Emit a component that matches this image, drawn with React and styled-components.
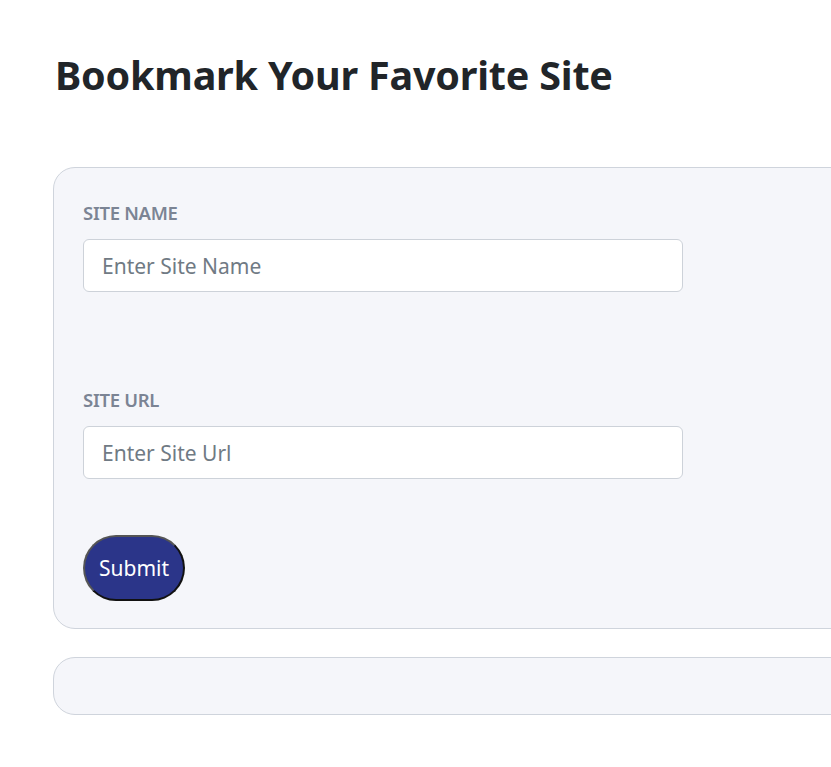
import React from 'react'
import styled, { createGlobalStyle } from 'styled-components'

const GlobalStyle = createGlobalStyle`
  body {
    margin: 0;
    background: #ffffff;
    font-family: "Noto Sans", "Open Sans", sans-serif;
    color: #212529;
    overflow: hidden;
  }
`

export default function App() {
  return (
    <Page>
      <GlobalStyle />
      <Title>Bookmark Your Favorite Site</Title>
      <Card>
        <Field>
          <Label htmlFor="siteName">SITE NAME</Label>
          <Input id="siteName" type="text" placeholder="Enter Site Name" />
        </Field>
        <Field $spaced>
          <Label htmlFor="siteUrl">SITE URL</Label>
          <Input id="siteUrl" type="text" placeholder="Enter Site Url" />
        </Field>
        <SubmitButton type="submit">Submit</SubmitButton>
      </Card>
      <ListCard />
    </Page>
  )
}

const Page = styled.div`
  padding: 52px 0 40px 53px;
  width: 960px;
`

const Title = styled.h1`
  margin: 0 0 68px 2px;
  font-size: 39.5px;
  font-weight: 700;
  line-height: 1.2;
  letter-spacing: -0.2px;
  color: #212529;
`

const Card = styled.form`
  background: #f5f6fa;
  border: 1px solid #cfd4dc;
  border-radius: 22px;
  padding: 32px 29px 27px;
  display: flex;
  flex-direction: column;
  align-items: flex-start;
`

const Field = styled.div`
  display: flex;
  flex-direction: column;
  margin-top: ${(p) => (p.$spaced ? '95px' : '0')};
`

const Label = styled.label`
  font-size: 18.5px;
  font-weight: 600;
  color: #7b8494;
  margin-bottom: 14px;
  letter-spacing: -0.3px;
`

const Input = styled.input`
  box-sizing: border-box;
  width: 600px;
  height: 53px;
  border: 1px solid #cdd2d9;
  border-radius: 6px;
  background: #ffffff;
  padding: 0 18px;
  font-family: inherit;
  font-size: 21px;
  color: #212529;
  outline: none;
  &::placeholder {
    color: #707a84;
  }
`

const SubmitButton = styled.button`
  margin-top: 56px;
  width: 102px;
  height: 66px;
  border: 2px solid;
  border-color: #555555 #111111 #111111 #555555;
  border-radius: 33px;
  background: #2b3589;
  color: #ffffff;
  font-family: inherit;
  font-size: 21px;
  cursor: pointer;
`

const ListCard = styled.div`
  margin-top: 28px;
  height: 56px;
  background: #f5f6fa;
  border: 1px solid #cfd4dc;
  border-radius: 22px;
`
